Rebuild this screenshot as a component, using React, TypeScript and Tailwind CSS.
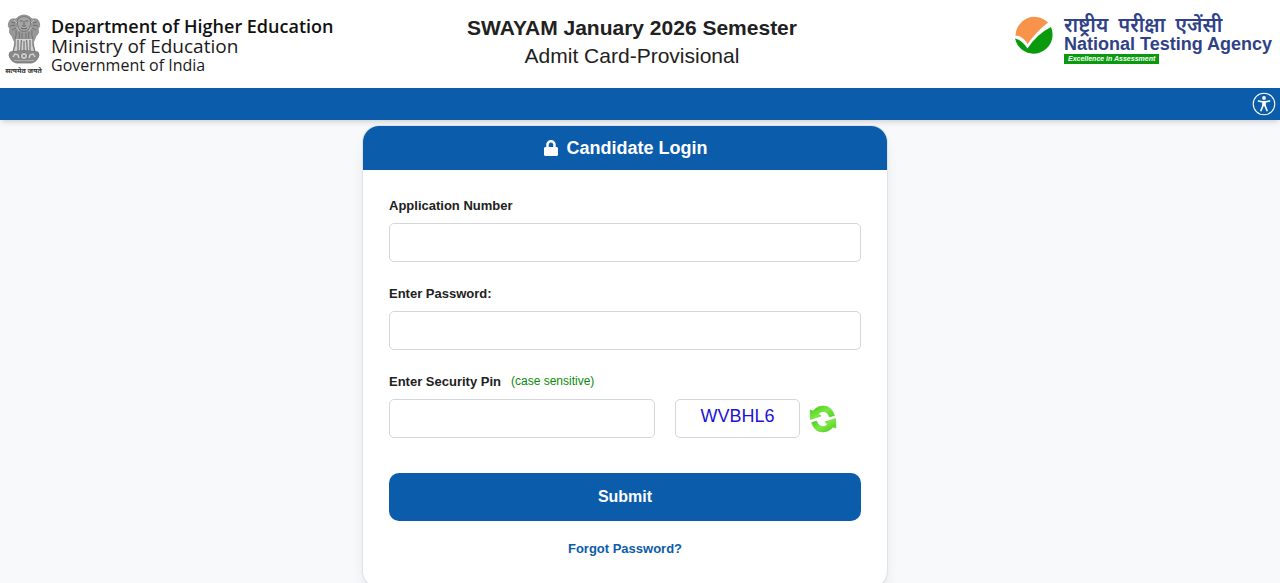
import React, { useState } from "react";
import { FaLock } from "react-icons/fa";

const inputClass =
  "block h-[39px] w-full rounded-[5px] border border-[#d3d7db] bg-white px-3 text-sm text-[#212529] outline-none focus:border-[#0b5cab]";

function StateEmblem() {
  return (
    <svg viewBox="0 0 34 50" className="h-[50px] w-[34px]" fill="none" aria-hidden="true">
      {/* lions */}
      <path
        d="M11 3 Q17 -1 23 3 L25 5 Q31 4 32 8 Q34 12 31 15 Q33 19 29 22 L27 27 H7 L5 22 Q1 19 3 15 Q0 12 2 8 Q3 4 9 5Z"
        fill="#999"
        stroke="#858585"
        strokeWidth="0.8"
      />
      <path
        d="M11 5 Q17 0 23 5 Q25 11 22 15 Q17 20 12 15 Q9 11 11 5Z"
        fill="#a5a5a5"
        stroke="#747474"
        strokeWidth="0.9"
      />
      <path d="M13 7h2.5M18.5 7H21M17 7v4M15 11.5q2 1.500 4 0M14 14q3 2 6 0" stroke="#666" strokeWidth="1" />
      <path d="M4 8l4 1M3 12l5-1M5 16l4-2M30 8l-4 1M31 12l-5-1M29 16l-4-2" stroke="#6f6f6f" strokeWidth="1" />
      <path d="M9 16q1 5-1 9M12 18q1 4 0 8M15 19v7M19 19v7M22 18q-1 4 0 8M25 16q-1 5 1 9" stroke="#757575" strokeWidth="1" />
      <path d="M7 6l3 3M27 6l-3 3M10 13l2 4M24 13l-2 4" stroke="#d0d0d0" strokeWidth="0.7" />
      {/* legs */}
      <path d="M7 25 H27 L28 38 H6Z" fill="#d2d2d2" />
      <path d="M8 25v6l-2 7M11 26v12M14.5 26l-1 12M19.5 26l1 12M23 26v12M26 25v6l2 7" stroke="#808080" strokeWidth="1.4" />
      <path d="M16 27h2v11h-2z" fill="#999" />
      {/* abacus with the wheel */}
      <path d="M3 38 Q17 35 31 38 Q33 41 31 44 Q29 48 25 49 H9 Q5 48 3 44 Q1 41 3 38Z" fill="#8a8a8a" stroke="#747474" strokeWidth="0.8" />
      <circle cx="17" cy="42" r="3.6" fill="#e2e2e2" stroke="#666" strokeWidth="0.9" />
      <circle cx="17" cy="42" r="1.1" fill="#666" />
      <path d="M17 38.5v7M13.5 42h7M14.5 39.5l5 5M19.5 39.5l-5 5" stroke="#888" strokeWidth="0.5" />
      <path d="M6 43l2-3 3 1 1 3M28 43l-2-3-3 1-1 3" stroke="#ddd" strokeWidth="1.2" />
      <path d="M7 46.5h20" stroke="#bbb" strokeWidth="0.7" />
    </svg>
  );
}

function NtaMark() {
  return (
    <svg viewBox="0 0 40 40" className="h-10 w-10 shrink-0" aria-hidden="true">
      <path d="M1.500 20 A19 19 0 0 1 34 6.500 Q23 15 13.500 28 Q11 23 6 20.500 Q3.500 19.500 1.500 20Z" fill="#f7934a" />
      <path d="M1 22.500 Q8 24 13.500 32.500 Q23 18 37 11 A19 19 0 1 1 1 22.500Z" fill="#0a9a0d" />
    </svg>
  );
}

function AccessibilityIcon() {
  return (
    <svg viewBox="0 0 24 24" className="h-6 w-6" fill="none" aria-hidden="true">
      <circle cx="12" cy="12" r="10.8" stroke="#fff" strokeWidth="1.1" />
      <circle cx="12" cy="6" r="1.9" fill="#fff" />
      <path
        d="M6.500 9 L10.500 9.800 H13.500 L17.500 9 M11.200 13 L9 18.500 M12.800 13 L15 18.500"
        stroke="#fff"
        strokeWidth="1.7"
        strokeLinecap="round"
      />
      <path d="M10.200 9.200h3.600v5h-3.600z" fill="#fff" />
    </svg>
  );
}

function RefreshIcon() {
  return (
    <svg viewBox="0 0 28 28" className="h-7 w-7" aria-hidden="true">
      <defs>
        <linearGradient id="refresh-green" x1="0" y1="0" x2="1" y2="1">
          <stop offset="0" stopColor="#3cc41a" />
          <stop offset="0.5" stopColor="#7bea3c" />
          <stop offset="1" stopColor="#45c81c" />
        </linearGradient>
      </defs>
      <g fill="url(#refresh-green)" stroke="#52c92b" strokeWidth="0.5" strokeLinejoin="round">
        <path d="M1 5 L4 6 Q8 1 14 1 Q22.500 1 25.500 10.500 L20.500 12 Q18.500 6.500 14 6.500 Q11 6.500 9.500 9 L12 11 L1.500 14.500Z" />
        <path d="M27 23 L24 22 Q20 27 14 27 Q5.500 27 2.500 17.500 L7.500 16 Q9.500 21.500 14 21.500 Q17 21.500 18.500 19 L16 17 L26.500 13.500Z" />
      </g>
    </svg>
  );
}

function Header() {
  return (
    <header className="grid grid-cols-[1fr_auto_1fr] items-start bg-white pt-3 pb-[10px]">
      <div className="flex items-start gap-2 pl-1">
        <div className="flex w-[39px] flex-col items-center pt-[2px]">
          <StateEmblem />
          <span className="font-['Noto_Sans','Noto_Sans_Devanagari',sans-serif] text-[7px] leading-[14px] font-bold whitespace-nowrap text-[#333]">
            सत्यमेव जयते
          </span>
        </div>
        <div className="font-['Open_Sans','Noto_Sans',sans-serif] whitespace-nowrap text-[#1a1a1a]">
          <p className="pt-1 text-[18px] leading-5 font-semibold text-[#111]">Department of Higher Education</p>
          <p className="text-[19px] leading-[21px]">Ministry of Education</p>
          <p className="text-[16px] leading-4">Government of India</p>
        </div>
      </div>

      <div className="pr-4 text-center whitespace-nowrap text-[#212121]">
        <h1 className="text-[21px] leading-8 font-bold">SWAYAM January 2026 Semester</h1>
        <h2 className="text-[21px] leading-6">Admit Card-Provisional</h2>
      </div>

      <div className="flex items-start justify-end gap-[10px] pt-1 pr-2">
        <NtaMark />
        <div className="whitespace-nowrap text-[#2f4287]">
          <p className="flex gap-[10px] font-['Noto_Sans','Noto_Sans_Devanagari',sans-serif] text-[20px] leading-[18px] font-semibold">
            <span>राष्ट्रीय</span>
            <span>परीक्षा</span>
            <span>एजेंसी</span>
          </p>
          <p className="text-[18px] leading-5 font-bold">National Testing Agency</p>
          <p className="w-fit bg-[#0a9a0d] px-1 text-[7px] leading-[10px] font-bold text-white italic">
            Excellence in Assessment
          </p>
        </div>
      </div>
    </header>
  );
}

export default function App() {
  const [pin, setPin] = useState("");

  return (
    <div className="min-h-screen bg-[#f7f9fb] font-['Liberation_Sans',Arial,sans-serif]">
      <Header />

      <nav className="flex h-8 items-center justify-end bg-[#0b5cab] pr-1 shadow-md">
        <button type="button" aria-label="Accessibility options">
          <AccessibilityIcon />
        </button>
      </nav>

      <main className="flex justify-center pt-[6px] pr-[30px]">
        <section className="w-full max-w-[524px] overflow-hidden rounded-2xl bg-white shadow-lg ring-1 ring-[#dfe3e8]">
          <h3 className="flex h-11 items-center justify-center gap-2 bg-[#0b5cab] text-[18px] font-bold text-white">
            <FaLock className="h-4 w-4" />
            Candidate Login
          </h3>

          <form className="px-[26px] pt-[26px] pb-7" onSubmit={(e) => e.preventDefault()}>
            <div className="mb-[22px]">
              <label htmlFor="application" className="mb-2 block text-[13px] leading-[19px] font-bold text-[#212121]">
                Application Number
              </label>
              <input id="application" type="text" className={inputClass} />
            </div>

            <div className="mb-[22px]">
              <label htmlFor="password" className="mb-2 block text-[13px] leading-[19px] font-bold text-[#212121]">
                Enter Password:
              </label>
              <input id="password" type="password" className={inputClass} />
            </div>

            <label
              htmlFor="pin"
              className="mb-2 flex items-center gap-[10px] text-[13px] leading-[19px] font-bold text-[#212121]"
            >
              Enter Security Pin
              <span className="text-[12px] font-normal text-[#0a8a0a]">(case sensitive)</span>
            </label>
            <div className="flex items-center">
              <div className="w-[266px]">
                <input
                  id="pin"
                  type="text"
                  value={pin}
                  onChange={(e) => setPin(e.target.value)}
                  className={inputClass}
                />
              </div>
              <div className="ml-5 flex h-[39px] w-[125px] items-center justify-center rounded-[5px] border border-[#d3d7db] pb-1 text-[18px] text-[#1d12d6]">
                WVBHL6
              </div>
              <button type="button" aria-label="Refresh security pin" className="ml-[9px]">
                <RefreshIcon />
              </button>
            </div>

            <button
              type="submit"
              className="mt-[35px] h-12 w-full rounded-[10px] bg-[#0b5cab] text-[16px] font-bold text-white hover:bg-[#094c8f]"
            >
              Submit
            </button>

            <a
              href="#forgot"
              className="mx-auto mt-[18px] block w-fit text-[13px] leading-5 font-bold text-[#0b5cab]"
            >
              Forgot Password?
            </a>
          </form>
        </section>
      </main>
    </div>
  );
}
